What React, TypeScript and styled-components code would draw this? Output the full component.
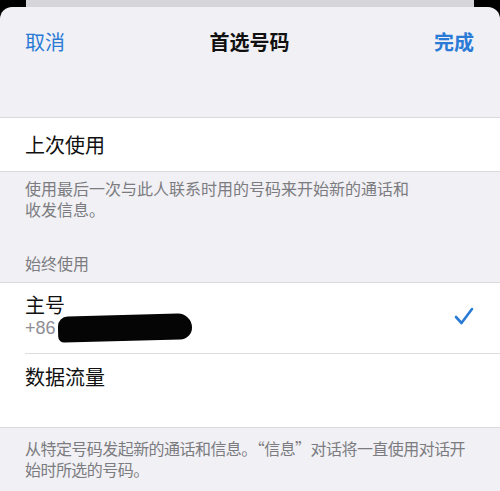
import React from "react";
import styled, { createGlobalStyle } from "styled-components";

const GlobalStyle = createGlobalStyle`
  html, body {
    margin: 0;
    padding: 0;
    background: #000;
  }
  body {
    font-family: "Noto Sans CJK SC", "Noto Sans", "Liberation Sans", sans-serif;
    -webkit-font-smoothing: antialiased;
  }
`;

const Screen = styled.div`
  width: 500px;
  height: 491px;
  overflow: hidden;
  background: #000;
`;

const BackCard = styled.div`
  height: 7px;
  margin: 0 26px;
  background: #d6d6da;
`;

const Sheet = styled.div`
  height: 484px;
  background: #f0f0f5;
  border-radius: 12px 12px 0 0;
  overflow: hidden;
`;

const NavBar = styled.div`
  height: 70px;
  padding: 0 26px 0 25px;
  display: flex;
  align-items: center;
  justify-content: space-between;
`;

const NavButton = styled.span<{ bold?: boolean }>`
  font-size: 20px;
  line-height: 24px;
  color: #2a7bd6;
  font-weight: ${({ bold }) => (bold ? 600 : 400)};
`;

const Title = styled.span`
  font-size: 20px;
  line-height: 24px;
  font-weight: 600;
  color: #111;
`;

const Spacer = styled.div<{ h: number }>`
  height: ${({ h }) => h}px;
`;

const Group = styled.div`
  background: #fff;
  border-top: 1px solid #d9d9de;
  border-bottom: 1px solid #d9d9de;
`;

const Row = styled.div<{ pt: number; pb: number; divider?: boolean }>`
  display: flex;
  align-items: center;
  padding: ${({ pt, pb }) => `${pt}px 26px ${pb}px 0`};
  margin-left: 25px;
  border-bottom: ${({ divider }) => (divider ? "1px solid #dedee2" : "none")};
`;

const RowText = styled.div`
  flex: 1;
  display: flex;
  flex-direction: column;
`;

const Label = styled.span`
  font-size: 20px;
  line-height: 24px;
  color: #111;
`;

const Sub = styled.span`
  display: flex;
  align-items: center;
  height: 20px;
  font-family: "Liberation Sans", "Noto Sans", sans-serif;
  font-size: 18px;
  line-height: 20px;
  color: #8e8e93;
  margin-top: 1px;
`;

const Redacted = styled.span`
  display: inline-block;
  flex: none;
  width: 134px;
  height: 26px;
  margin: -3px 0 -3px 2px;
  background: #050505;
  border-radius: 10px 14px 12px 6px;
  transform: rotate(-1.5deg);
`;

const Footer = styled.div<{ pt: number; tight?: boolean }>`
  padding: ${({ pt }) => pt}px 0 0 25px;
  font-size: 16px;
  line-height: 21px;
  color: #7c7c80;
  white-space: nowrap;
  letter-spacing: ${({ tight }) => (tight ? "-0.55px" : "0")};
`;

const SectionHeader = styled.div`
  padding: 0 25px 8px;
  font-size: 16px;
  line-height: 21px;
  color: #7c7c80;
`;

const Check = () => (
  <svg width="20" height="18" viewBox="0 0 20 18" fill="none">
    <path
      d="M2 10 L7.5 16 L18 2"
      stroke="#2a7bd6"
      strokeWidth="2.6"
      strokeLinecap="round"
      strokeLinejoin="round"
    />
  </svg>
);

const App: React.FC = () => (
  <Screen>
    <GlobalStyle />
    <BackCard />
    <Sheet>
      <NavBar>
        <NavButton>取消</NavButton>
        <Title>首选号码</Title>
        <NavButton bold>完成</NavButton>
      </NavBar>
      <Spacer h={40} />
      <Group>
        <Row pt={15} pb={14}>
          <Label>上次使用</Label>
        </Row>
      </Group>
      <Footer pt={6}>
        使用最后一次与此人联系时用的号码来开始新的通话和
        <br />
        收发信息。
      </Footer>
      <Spacer h={33} />
      <SectionHeader>始终使用</SectionHeader>
      <Group>
        <Row pt={10} pb={15} divider>
          <RowText>
            <Label>主号</Label>
            <Sub>
              +86
              <Redacted />
            </Sub>
          </RowText>
          <Check />
        </Row>
        <Row pt={11} pb={38}>
          <Label>数据流量</Label>
        </Row>
      </Group>
      <Footer pt={10} tight>
        从特定号码发起新的通话和信息。“信息”对话将一直使用对话开
        <br />
        始时所选的号码。
      </Footer>
    </Sheet>
  </Screen>
);

export default App;
